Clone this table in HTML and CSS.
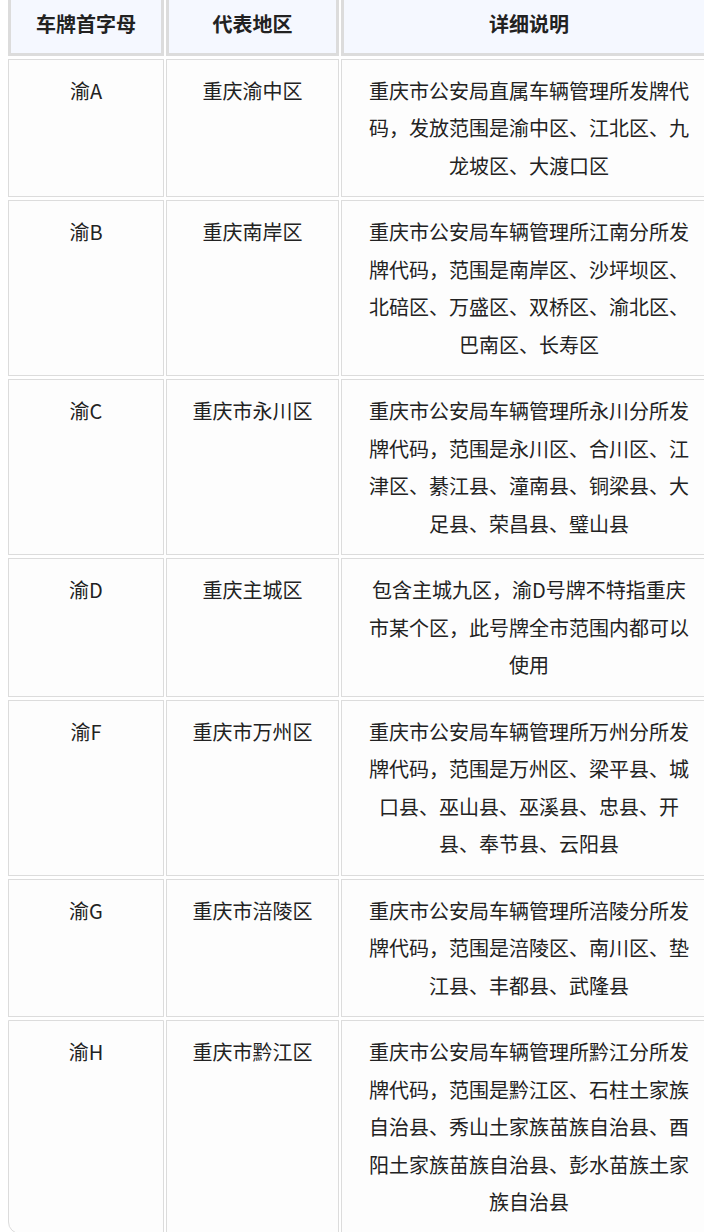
FILE: index.html
```html
<!DOCTYPE html>
<html lang="zh-CN">
<head>
<meta charset="utf-8">
<title>重庆车牌</title>
<link rel="stylesheet" href="styles.css">
</head>
<body>
<div class="plate-table">
  <div class="th">车牌首字母</div>
  <div class="th">代表地区</div>
  <div class="th">详细说明</div>

  <div class="td">渝A</div>
  <div class="td">重庆渝中区</div>
  <div class="td desc">重庆市公安局直属车辆管理所发牌代码，发放范围是渝中区、江北区、九龙坡区、大渡口区</div>

  <div class="td">渝B</div>
  <div class="td">重庆南岸区</div>
  <div class="td desc">重庆市公安局车辆管理所江南分所发牌代码，范围是南岸区、沙坪坝区、北碚区、万盛区、双桥区、渝北区、巴南区、长寿区</div>

  <div class="td">渝C</div>
  <div class="td">重庆市永川区</div>
  <div class="td desc">重庆市公安局车辆管理所永川分所发牌代码，范围是永川区、合川区、江津区、綦江县、潼南县、铜梁县、大足县、荣昌县、璧山县</div>

  <div class="td">渝D</div>
  <div class="td">重庆主城区</div>
  <div class="td desc">包含主城九区，渝D号牌不特指重庆市某个区，此号牌全市范围内都可以使用</div>

  <div class="td">渝F</div>
  <div class="td">重庆市万州区</div>
  <div class="td desc">重庆市公安局车辆管理所万州分所发牌代码，范围是万州区、梁平县、城口县、巫山县、巫溪县、忠县、开县、奉节县、云阳县</div>

  <div class="td">渝G</div>
  <div class="td">重庆市涪陵区</div>
  <div class="td desc">重庆市公安局车辆管理所涪陵分所发牌代码，范围是涪陵区、南川区、垫江县、丰都县、武隆县</div>

  <div class="td last-first">渝H</div>
  <div class="td">重庆市黔江区</div>
  <div class="td desc">重庆市公安局车辆管理所黔江分所发牌代码，范围是黔江区、石柱土家族自治县、秀山土家族苗族自治县、酉阳土家族苗族自治县、彭水苗族土家族自治县</div>
</div>
</body>
</html>
```

FILE: styles.css
```css
html, body {
  margin: 0;
  padding: 0;
  background: #ffffff;
  overflow: hidden;
}

body {
  font-family: "Noto Sans CJK SC", "Noto Sans", sans-serif;
  font-size: 20px;
  color: #222222;
}

.plate-table {
  display: grid;
  grid-template-columns: 156px 173px 376px;
  column-gap: 2px;
  row-gap: 3px;
  width: 709px;
  margin: -9px 0 0 8px;
}

.th,
.td {
  box-sizing: border-box;
  text-align: center;
  line-height: 37.5px;
}

.th {
  background: #f5f8ff;
  border: 3px solid #dcdcdc;
  padding: 11px 8px 10px;
  font-weight: 700;
}

.td {
  background: #fdfdfd;
  border: 1px solid #dcdcdc;
  padding: 12px 8px;
}

.td.desc {
  padding: 12px 24px;
}

.td.last-first {
  border-bottom-left-radius: 12px;
}
```
